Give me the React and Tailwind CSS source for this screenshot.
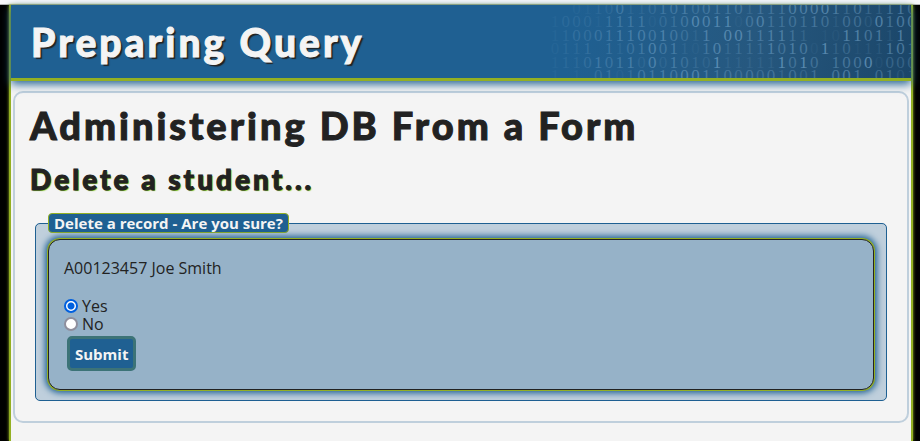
const ROWS = [
  { digits: "0001100110101001101111000011011110", glow: "0011225223556455553555777874643675" },
  { digits: "1000111110010001100011011010000100", glow: "1222145551345878815755556525528677" },
  { digits: "1100011100100110001111110101101110", glow: "1233456665754270886677530118867280" },
  { digits: "0111011010011010111110100110111101", glow: "1223042457562157344475761934122776" },
  { digits: "1110101100010101111111010010000000", glow: "1223545627264329222229595066691444" },
  { digits: "1010010101100011000001001000100101", glow: "1010341355657765545453535067605523" },
];

function BinaryRain() {
  return (
    <svg
      aria-hidden="true"
      className="absolute top-0 right-0 h-[73px] w-[362px] font-['Liberation_Serif',serif]"
      viewBox="0 0 362 73"
    >
      {ROWS.map((row, r) =>
        row.digits.split("").map((digit, c) =>
          row.glow[c] === "0" ? null : (
            <text
              key={`${r}-${c}`}
              x={6 + c * 10.8}
              y={9 + r * 13.4}
              textAnchor="middle"
              fontSize="17"
              fill="#7fb0d6"
              opacity={Number(row.glow[c]) * 0.065}
            >
              {digit}
            </text>
          )
        )
      )}
    </svg>
  );
}

function Header() {
  return (
    <header className="relative z-10 border-b-[3px] border-[#93b023] bg-[#1f6092] bg-[linear-gradient(100deg,#1f6092_62%,#26587f_82%,#1b4669_100%)] shadow-[0_3px_9px_#1f6092]">
      <BinaryRain />
      <h1 className="relative flex h-[73px] items-center px-5 pt-[2px] font-['Lato',sans-serif] text-[39px] leading-none font-black tracking-[3px] text-[#f4f4f4] [-webkit-text-stroke:1px_#f4f4f4] [text-shadow:2px_2px_1px_#222]">
        Preparing Query
      </h1>
    </header>
  );
}

function Choice({ id, label, defaultChecked }) {
  return (
    <div className="flex h-[18px] items-center gap-1">
      <input
        id={id}
        type="radio"
        name="confirm"
        value={id}
        defaultChecked={defaultChecked}
        className="size-[14px] appearance-none rounded-full border-2 border-[#8f8f9d] bg-white checked:border-[#0060df] checked:bg-[radial-gradient(circle,#0060df_3px,#fff_4px)]"
      />
      <label htmlFor={id}>{label}</label>
    </div>
  );
}

function DeleteForm() {
  return (
    <form onSubmit={(event) => event.preventDefault()}>
      <fieldset className="mx-[5px] rounded-[5px] border border-[#1f6092] bg-[#bfcfdc] px-3 pb-[10px]">
        <legend className="rounded-[4px] border border-[#93b023] bg-[#1f6092] px-[5px] text-[15px] leading-[18px] font-bold text-[#f4f4f4]">
          Delete a record - Are you sure?
        </legend>
        <div className="mt-[6px] rounded-[12px] border border-[#222] bg-[#96b2c8] px-[15px] pt-[19px] pb-[18px] text-base leading-[18px] shadow-[0_0_0_1px_#93b023,0_0_6px_3px_#1f6092]">
          <p className="mb-5">A00123457 Joe Smith</p>
          <Choice id="yes" label="Yes" defaultChecked />
          <Choice id="no" label="No" />
          <button
            type="submit"
            className="mt-[3px] ml-[3px] block h-[35px] rounded-[5px] border-[3px] border-[#3c7377] bg-[#1f6092] px-[5px] text-[15px] font-bold text-[#f4f4f4]"
          >
            Submit
          </button>
        </div>
      </fieldset>
    </form>
  );
}

export default function App() {
  return (
    <div className="flex min-h-screen flex-col bg-black font-['Open_Sans',sans-serif] text-[#222]">
      <div className="h-[5px] border-b border-[#b5b5b5] bg-[#f9f9fb]" />
      <div className="mr-[7px] ml-[9px] flex-1 border-x-2 border-[#93b023] bg-[#f4f4f4] shadow-[0_0_3px_#93b023]">
        <Header />
        <main className="mx-[2px] mt-[10px] rounded-[10px] border-2 border-[#bfcfdc] px-[15px] pb-5">
          <h2 className="pt-[10px] font-['Lato',sans-serif] text-[38px] leading-[44px] font-black tracking-[3px] [-webkit-text-stroke:1px_#222]">
            Administering DB From a Form
          </h2>
          <h3 className="mt-4 mb-[18px] font-['Lato',sans-serif] text-[28px] leading-8 font-black tracking-[3px] [-webkit-text-stroke:1px_#222] [text-shadow:1px_1px_1px_#7fbf1f]">
            Delete a student...
          </h3>
          <DeleteForm />
        </main>
      </div>
    </div>
  );
}
